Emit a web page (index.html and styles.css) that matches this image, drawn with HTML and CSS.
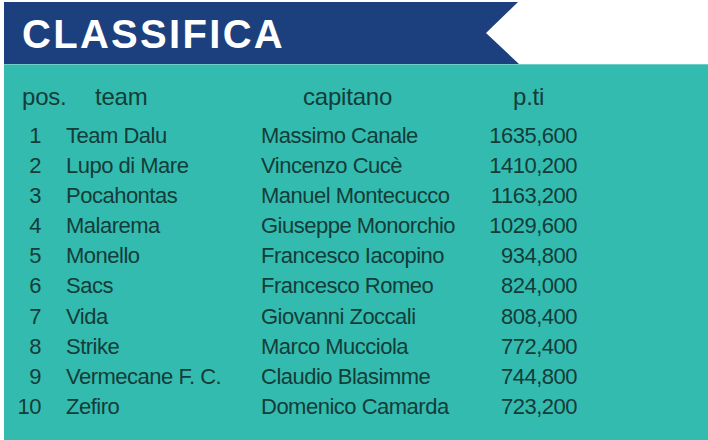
FILE: index.html
```html
<!DOCTYPE html>
<html lang="it">
<head>
<meta charset="utf-8">
<title>Classifica</title>
<link rel="stylesheet" href="styles.css">
</head>
<body>
<div class="page">
  <header class="banner">
    <div class="flag"><h1 class="title">CLASSIFICA</h1></div>
  </header>
  <section class="board">
    <div class="head">
      <span>pos.</span><span>team</span><span>capitano</span><span>p.ti</span>
    </div>
    <div class="rows">
      <span class="pos">1</span><span class="team">Team Dalu</span><span class="cap">Massimo Canale</span><span class="pts">1635,600</span>
      <span class="pos">2</span><span class="team">Lupo di Mare</span><span class="cap">Vincenzo Cucè</span><span class="pts">1410,200</span>
      <span class="pos">3</span><span class="team">Pocahontas</span><span class="cap">Manuel Montecucco</span><span class="pts">1163,200</span>
      <span class="pos">4</span><span class="team">Malarema</span><span class="cap">Giuseppe Monorchio</span><span class="pts">1029,600</span>
      <span class="pos">5</span><span class="team">Monello</span><span class="cap">Francesco Iacopino</span><span class="pts">934,800</span>
      <span class="pos">6</span><span class="team">Sacs</span><span class="cap">Francesco Romeo</span><span class="pts">824,000</span>
      <span class="pos">7</span><span class="team">Vida</span><span class="cap">Giovanni Zoccali</span><span class="pts">808,400</span>
      <span class="pos">8</span><span class="team">Strike</span><span class="cap">Marco Mucciola</span><span class="pts">772,400</span>
      <span class="pos">9</span><span class="team">Vermecane F. C.</span><span class="cap">Claudio Blasimme</span><span class="pts">744,800</span>
      <span class="pos">10</span><span class="team">Zefiro</span><span class="cap">Domenico Camarda</span><span class="pts">723,200</span>
    </div>
  </section>
</div>
</body>
</html>
```
FILE: styles.css
```css
html, body {
  margin: 0;
  padding: 0;
  background: #ffffff;
}
body {
  font-family: "Liberation Sans", Arial, sans-serif;
}
.page {
  width: 100%;
  min-height: 100vh;
  padding-left: 4px;
  box-sizing: border-box;
  display: flex;
  flex-direction: column;
}
.banner {
  padding-top: 2px;
  background: #ffffff;
}
.flag {
  width: 515px;
  height: 62px;
  background: #1c3f7e;
  clip-path: polygon(0 0, 514px 0, 482px 31px, 515px 62px, 0 62px);
  display: flex;
  align-items: center;
}
.title {
  margin: 0 0 0 18px;
  color: #ffffff;
  font-size: 40px;
  font-weight: bold;
  letter-spacing: 2.3px;
  line-height: 1;
  padding-top: 2px;
}
.board {
  flex: 1 0 auto;
  background: #34bbaf;
  border-top: 1px solid #6fcfc5;
  color: #133d39;
  padding-top: 17px;
}
.head {
  display: grid;
  grid-template-columns: 73px 208px 210px auto;
  padding-left: 18px;
  font-size: 24px;
  line-height: 30px;
  letter-spacing: -0.2px;
}
.rows {
  margin-top: 9px;
  display: grid;
  grid-template-columns: 37px 220px 220px 96px;
  font-size: 22px;
  line-height: 30.1px;
  letter-spacing: -0.5px;
}
.pos {
  text-align: right;
}
.team {
  padding-left: 25px;
}
.team, .cap {
  white-space: nowrap;
}
.pts {
  text-align: right;
}
```
